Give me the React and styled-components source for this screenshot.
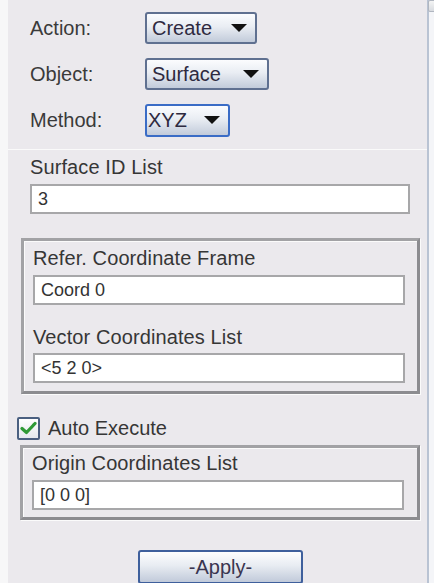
import React, { useState } from "react";
import styled, { createGlobalStyle } from "styled-components";

const GlobalStyle = createGlobalStyle`
  html, body {
    margin: 0;
    padding: 0;
    background: #f6f6f7;
  }
  body {
    font-family: "Liberation Sans", Arial, sans-serif;
  }
`;

const Page = styled.div`
  display: flex;
  width: 434px;
  height: 583px;
  overflow: hidden;
`;

const LeftEdge = styled.div`
  width: 8px;
  flex-shrink: 0;
  background: #f7f7f8;
`;

const Panel = styled.div`
  width: 419px;
  flex-shrink: 0;
  background: #ebe9ed;
  display: flex;
  flex-direction: column;
  color: #363636;
  font-size: 20px;
`;

const ScrollStrip = styled.div`
  position: relative;
  flex: 1;
  background: #f4f5f8;
  border-left: 2px solid #b9c3d3;
`;

const ScrollButton = styled.div`
  position: absolute;
  top: 0;
  left: -1px;
  width: 8px;
  height: 10px;
  background: linear-gradient(#f4f4f4, #d8dbe0);
  border: 1px solid #b0b6c0;
  border-radius: 2px;
`;

const TopSection = styled.div`
  display: flex;
  flex-direction: column;
  gap: 14px;
  padding: 12px 0 13px 22px;
`;

const Row = styled.div`
  display: flex;
  align-items: center;
  height: 32px;
`;

const RowLabel = styled.span`
  width: 115px;
  color: #3a3a3a;
`;

const Dropdown = styled.button`
  display: flex;
  align-items: center;
  justify-content: space-between;
  box-sizing: border-box;
  width: ${(p) => p.$width}px;
  height: ${(p) => (p.$focused ? 33 : 32)}px;
  padding: 0 8px 0 ${(p) => (p.$focused ? 1 : 5)}px;
  font-family: inherit;
  font-size: 20px;
  color: #2e2a40;
  background: linear-gradient(#fbfcfe 0%, #e9edf3 45%, #c2cbda 100%);
  border: 2px solid ${(p) => (p.$focused ? "#3a6cc6" : "#5f7090")};
  border-radius: 3px;
  cursor: pointer;
`;

const Arrow = styled.span`
  width: 0;
  height: 0;
  border-left: 8px solid transparent;
  border-right: 8px solid transparent;
  border-top: 8px solid #111;
`;

const Separator = styled.div`
  height: 2px;
  background: #a9a9ad;
  border-bottom: 1px solid #fafafa;
`;

const Body = styled.div`
  display: flex;
  flex-direction: column;
  padding: 6px 0 0 0;
`;

const FieldLabel = styled.div`
  height: 22px;
  line-height: 22px;
  color: #363636;
  letter-spacing: 0.1px;
`;

const TextInput = styled.input`
  box-sizing: border-box;
  display: block;
  width: ${(p) => p.$width || 372}px;
  height: 30px;
  margin-top: ${(p) => p.$top || 6}px;
  padding: 0 6px;
  font-family: inherit;
  font-size: 18px;
  color: #333;
  background: #fff;
  border: 2px solid #a7a7a9;
  outline: none;
`;

const TopField = styled.div`
  padding-left: 22px;
`;

const Group = styled.div`
  box-sizing: border-box;
  margin-left: ${(p) => p.$left}px;
  margin-top: ${(p) => p.$mt || 0}px;
  width: ${(p) => 412 - p.$left}px;
  padding: ${(p) => p.$pt}px 12px ${(p) => p.$pb}px 9px;
  border: 3px solid #a2a2a5;
  border-right-color: #8c8c90;
  border-bottom-color: #8c8c90;
  box-shadow: inset 1px 1px 0 #fbfbfb, 1px 1px 0 #fbfbfb;
`;

const GroupGap = styled.div`
  height: 21px;
`;

const CheckRow = styled.label`
  display: flex;
  align-items: center;
  gap: 8px;
  margin: 23px 0 6px 9px;
  height: 22px;
  cursor: pointer;
`;

const CheckBox = styled.span`
  box-sizing: border-box;
  display: flex;
  align-items: center;
  justify-content: center;
  width: 23px;
  height: 23px;
  background: linear-gradient(#ffffff, #e4e8ee);
  border: 2px solid #4a5f80;
  border-radius: 2px;
`;

const ApplyButton = styled.button`
  box-sizing: border-box;
  align-self: flex-start;
  margin: 30px 0 0 130px;
  width: 165px;
  height: 34px;
  font-family: inherit;
  font-size: 20px;
  color: #3a3550;
  background: linear-gradient(#fdfdfe 0%, #e8ecf2 45%, #c1cada 100%);
  border: 2px solid #3e5f9c;
  border-radius: 3px;
  cursor: pointer;
`;

const Check = () => (
  <svg width="17" height="14" viewBox="0 0 17 14">
    <path
      d="M2 7.5 L6.5 11.5 L15 2.5"
      fill="none"
      stroke="#2f9a36"
      strokeWidth="3.2"
      strokeLinecap="round"
      strokeLinejoin="round"
    />
  </svg>
);

export default function App() {
  const [auto, setAuto] = useState(true);

  return (
    <>
      <GlobalStyle />
      <Page>
        <LeftEdge />
        <Panel>
          <TopSection>
            <Row>
              <RowLabel>Action:</RowLabel>
              <Dropdown $width={112}>
                Create <Arrow />
              </Dropdown>
            </Row>
            <Row>
              <RowLabel>Object:</RowLabel>
              <Dropdown $width={124}>
                Surface <Arrow />
              </Dropdown>
            </Row>
            <Row>
              <RowLabel>Method:</RowLabel>
              <Dropdown $width={85} $focused>
                XYZ <Arrow />
              </Dropdown>
            </Row>
          </TopSection>
          <Separator />
          <Body>
            <TopField>
              <FieldLabel>Surface ID List</FieldLabel>
              <TextInput $width={380} defaultValue="3" />
            </TopField>

            <Group $left={13} $mt={24} $pt={6} $pb={8}>
              <FieldLabel>Refer. Coordinate Frame</FieldLabel>
              <TextInput defaultValue="Coord 0" />
              <GroupGap />
              <FieldLabel>Vector Coordinates List</FieldLabel>
              <TextInput $top={5} defaultValue="<5 2 0>" />
            </Group>

            <CheckRow onClick={() => setAuto(!auto)}>
              <CheckBox>{auto && <Check />}</CheckBox>
              Auto Execute
            </CheckRow>

            <Group $left={12} $pt={4} $pb={7}>
              <FieldLabel>Origin Coordinates List</FieldLabel>
              <TextInput defaultValue="[0 0 0]" />
            </Group>

            <ApplyButton>-Apply-</ApplyButton>
          </Body>
        </Panel>
        <ScrollStrip>
          <ScrollButton />
        </ScrollStrip>
      </Page>
    </>
  );
}
